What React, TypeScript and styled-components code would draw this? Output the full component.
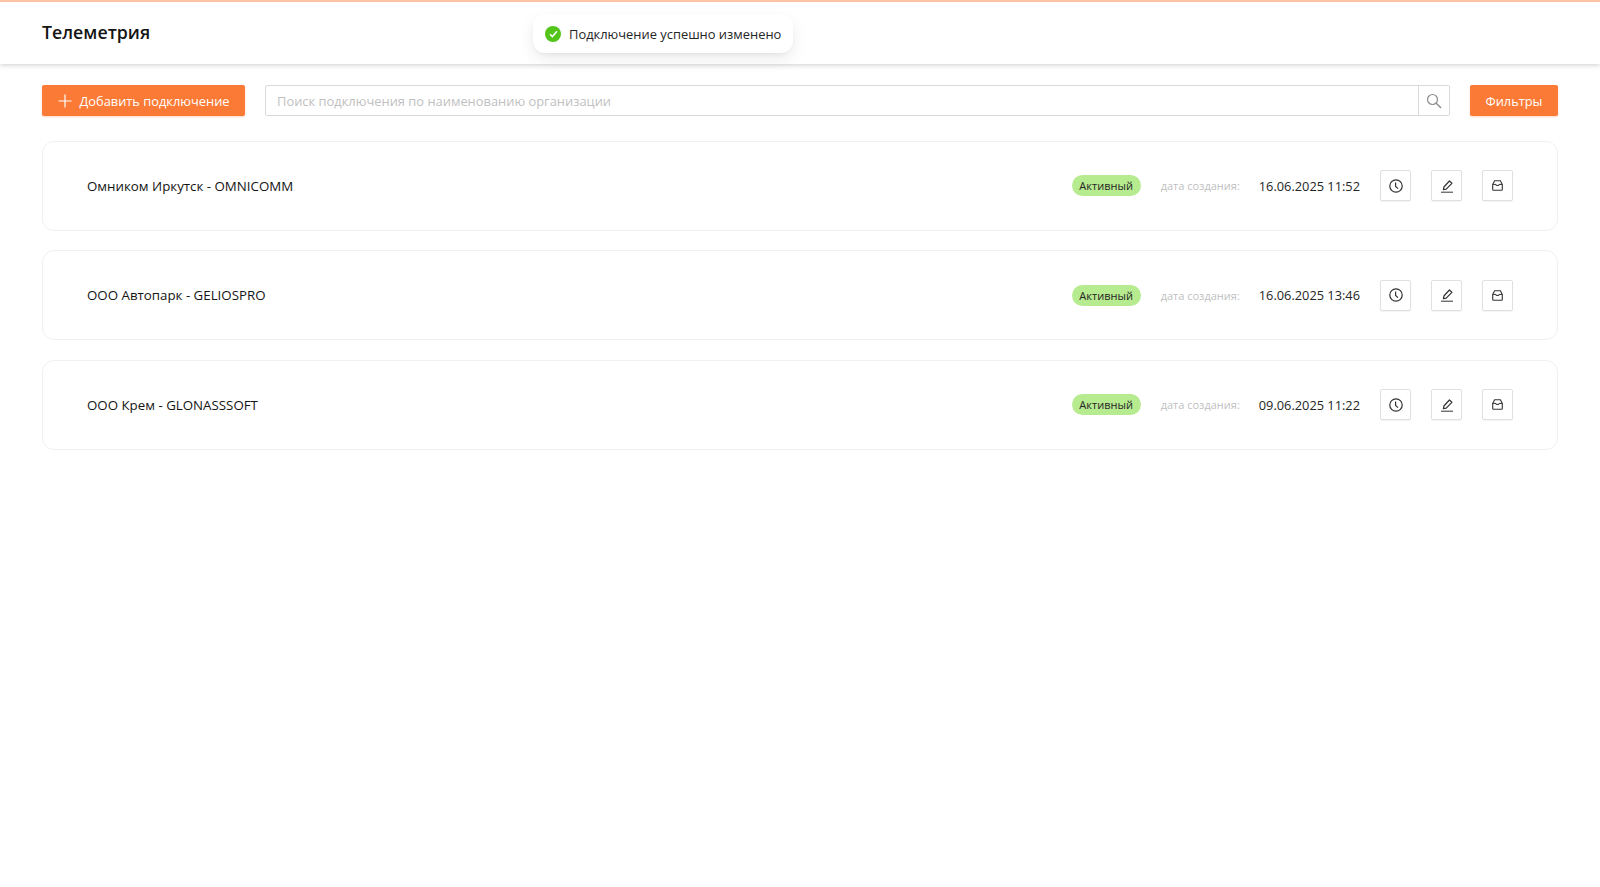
import React from "react";
import styled, { createGlobalStyle } from "styled-components";

const connections = [
  { id: 1, name: "Омником Иркутск - OMNICOMM", created: "16.06.2025 11:52" },
  { id: 2, name: "ООО Автопарк - GELIOSPRO", created: "16.06.2025 13:46" },
  { id: 3, name: "ООО Крем - GLONASSSOFT", created: "09.06.2025 11:22" },
];

const ClockIcon = () => (
  <svg width="14" height="14" viewBox="0 0 14 14" fill="none" stroke="#333">
    <circle cx="7" cy="7" r="6.2" strokeWidth="1.2" />
    <path d="M6.6 3.4V7.4L9 9.6" strokeWidth="1.2" />
  </svg>
);

const PencilIcon = () => (
  <svg width="14" height="14" viewBox="0 0 14 14" fill="none" stroke="#333">
    <path d="M1 13.2H13" strokeWidth="1" />
    <path d="M3.4 10.6 3.9 8 9.4 2 11.9 4.3 6.2 10.2Z" strokeWidth="1.2" strokeLinejoin="round" />
  </svg>
);

const BoxIcon = () => (
  <svg width="11" height="11" viewBox="0 0 11 11" fill="none" stroke="#333">
    <path d="M.7 4.4 2.6.8H8.4L10.3 4.4V9.4a.8.8 0 0 1-.8.8H1.5a.8.8 0 0 1-.8-.8Z" strokeWidth="1.1" strokeLinejoin="round" />
    <path d="M.7 4.4H4V5.4H7V4.4H10.3" strokeWidth="1" />
  </svg>
);

const SearchIcon = () => (
  <svg width="16" height="16" viewBox="0 0 16 16" fill="none" stroke="#8c8c8c">
    <circle cx="6.5" cy="6.5" r="5" strokeWidth="1.2" />
    <path d="M10.2 10.2 15 15" strokeWidth="1.4" />
  </svg>
);

const PlusIcon = () => (
  <svg width="14" height="14" viewBox="0 0 14 14" stroke="#fff" fill="none">
    <path d="M7 .5v13M.5 7h13" strokeWidth="1.2" />
  </svg>
);

const App = () => {
  return (
    <Page>
      <GlobalStyle />
      <Header>
        <Title>Телеметрия</Title>
      </Header>
      <Toast>
        <ToastMark>
          <svg width="9" height="8" viewBox="0 0 9 8" fill="none" stroke="#fff">
            <path d="M1 4.2 3.4 6.6 8 1.2" strokeWidth="1.5" />
          </svg>
        </ToastMark>
        Подключение успешно изменено
      </Toast>
      <Content>
        <Toolbar>
          <PrimaryButton>
            <PlusIcon />
            Добавить подключение
          </PrimaryButton>
          <SearchGroup>
            <SearchInput placeholder="Поиск подключения по наименованию организации" />
            <SearchButton>
              <SearchIcon />
            </SearchButton>
          </SearchGroup>
          <PrimaryButton>Фильтры</PrimaryButton>
        </Toolbar>
        <List>
          {connections.map((item) => (
            <Card key={item.id}>
              <Name>{item.name}</Name>
              <Status>Активный</Status>
              <CreatedLabel>дата создания:</CreatedLabel>
              <CreatedValue>{item.created}</CreatedValue>
              <Actions>
                <IconButton>
                  <ClockIcon />
                </IconButton>
                <IconButton>
                  <PencilIcon />
                </IconButton>
                <IconButton>
                  <BoxIcon />
                </IconButton>
              </Actions>
            </Card>
          ))}
        </List>
      </Content>
    </Page>
  );
};

const GlobalStyle = createGlobalStyle`
  html, body {
    margin: 0;
    padding: 0;
    background: #fff;
  }
  body {
    font-family: "Open Sans", "Noto Sans", sans-serif;
    font-size: 14px;
    color: #000;
  }
  * {
    box-sizing: border-box;
  }
`;

const Page = styled.div`
  position: relative;
  min-height: 887px;
`;

const Header = styled.header`
  display: flex;
  align-items: center;
  height: 64px;
  padding: 0 42px 2px;
  background: #fff;
  border-top: 2px solid #fcc4a6;
  box-shadow: 0 1px 5px rgba(0, 0, 0, 0.2);
`;

const Title = styled.h1`
  margin: 0;
  font-size: 17.8px;
  font-weight: 600;
  color: #141414;
`;

const Toast = styled.div`
  position: absolute;
  top: 14px;
  left: 533px;
  display: flex;
  align-items: center;
  gap: 8px;
  height: 39px;
  padding: 0 12px;
  background: #fff;
  border-radius: 12px;
  font-size: 12.9px;
  color: #262626;
  box-shadow: 0 6px 16px rgba(0, 0, 0, 0.08), 0 3px 6px -4px rgba(0, 0, 0, 0.12);
`;

const ToastMark = styled.span`
  display: flex;
  align-items: center;
  justify-content: center;
  width: 16px;
  height: 16px;
  border-radius: 50%;
  background: #52c41a;
`;

const Content = styled.main`
  padding: 21px 42px 0;
`;

const Toolbar = styled.div`
  display: flex;
  align-items: center;
  gap: 20px;
  height: 31px;
`;

const PrimaryButton = styled.button`
  display: flex;
  align-items: center;
  justify-content: center;
  gap: 8px;
  height: 31px;
  padding: 0 15.5px;
  border: none;
  border-radius: 2px;
  background: #fb7a35;
  color: #fff;
  font-family: inherit;
  font-size: 12.85px;
  font-weight: 500;
  box-shadow: 0 1px 2px rgba(251, 122, 53, 0.3);
`;

const SearchGroup = styled.div`
  display: flex;
  flex: 1;
  height: 31px;
  border: 1px solid #d9d9d9;
  border-radius: 2px;
`;

const SearchInput = styled.input`
  flex: 1;
  min-width: 0;
  padding: 0 11px;
  border: none;
  outline: none;
  background: transparent;
  font-family: inherit;
  font-size: 12.9px;

  &::placeholder {
    color: #bfbfbf;
  }
`;

const SearchButton = styled.button`
  display: flex;
  align-items: center;
  justify-content: center;
  width: 31px;
  padding: 0;
  border: none;
  border-left: 1px solid #d9d9d9;
  background: #fff;
`;

const List = styled.div`
  display: flex;
  flex-direction: column;
  gap: 19.6px;
  margin-top: 24.5px;
`;

const Card = styled.article`
  display: flex;
  align-items: center;
  height: 90px;
  padding: 0 44px;
  border: 1px solid #f0f0f0;
  border-radius: 12px;
  background: #fff;
`;

const Name = styled.div`
  flex: 1;
  font-size: 13.3px;
  color: #141414;
`;

const Status = styled.span`
  display: flex;
  align-items: center;
  justify-content: center;
  width: 69px;
  height: 21px;
  border-radius: 11px;
  background: #b7eb8f;
  font-size: 11px;
  color: #262626;
`;

const CreatedLabel = styled.span`
  margin-left: 20px;
  font-size: 11px;
  color: #bfbfbf;
`;

const CreatedValue = styled.span`
  margin-left: 19px;
  font-size: 12.8px;
  color: #262626;
`;

const Actions = styled.div`
  display: flex;
  gap: 20px;
  margin-left: 20px;
`;

const IconButton = styled.button`
  display: flex;
  align-items: center;
  justify-content: center;
  width: 31px;
  height: 31px;
  padding: 0;
  border: 1px solid #e0e0e0;
  border-radius: 2px;
  background: #fff;
  box-shadow: 0 1px 1px rgba(0, 0, 0, 0.05);
`;

export default App;
